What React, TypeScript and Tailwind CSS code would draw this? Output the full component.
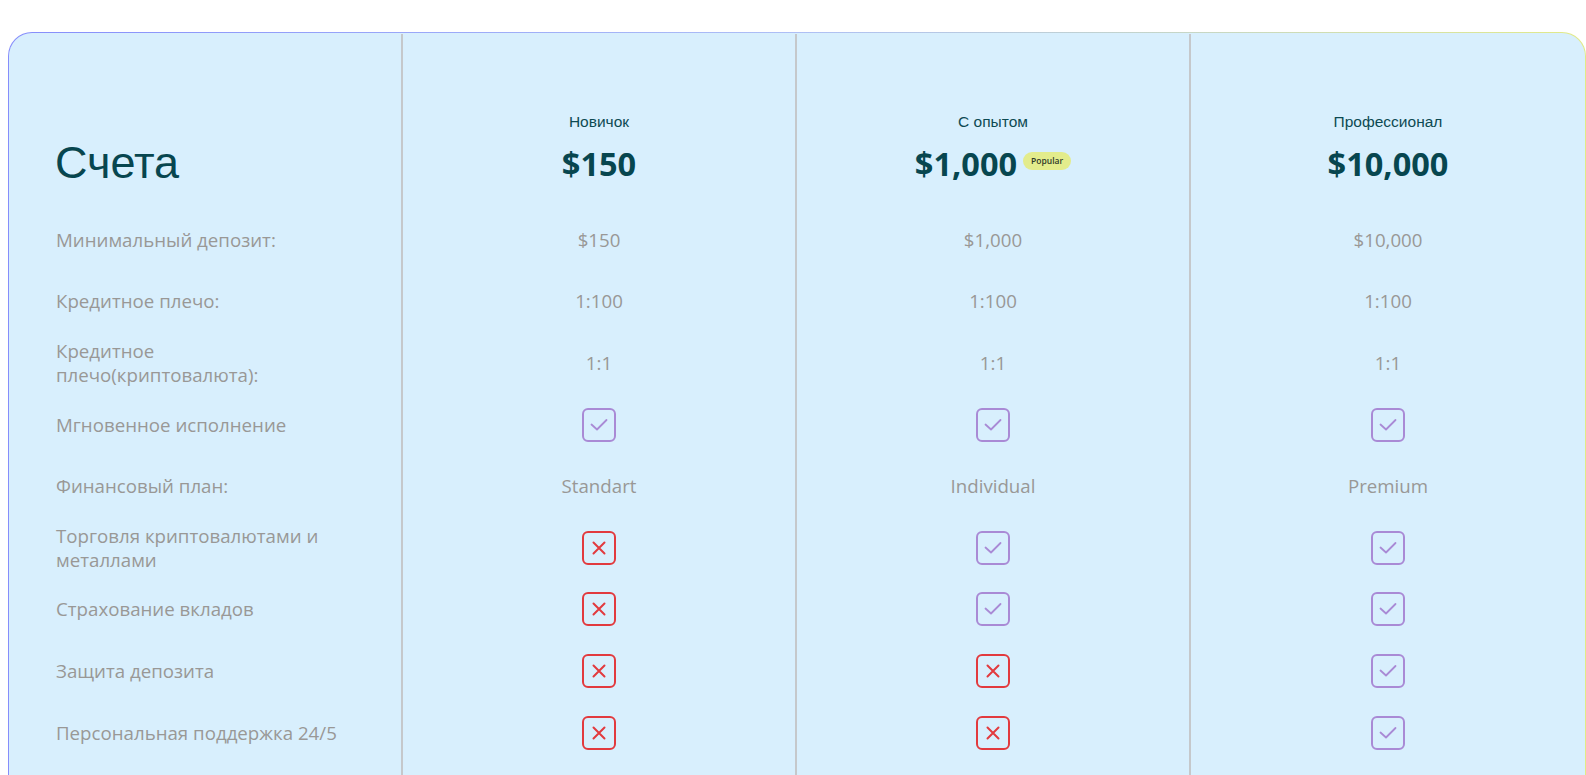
import React from "react";

type Cell = string | boolean;

const rows: { label: string; values: Cell[] }[] = [
  { label: "Минимальный депозит:", values: ["$150", "$1,000", "$10,000"] },
  { label: "Кредитное плечо:", values: ["1:100", "1:100", "1:100"] },
  { label: "Кредитное плечо(криптовалюта):", values: ["1:1", "1:1", "1:1"] },
  { label: "Мгновенное исполнение", values: [true, true, true] },
  { label: "Финансовый план:", values: ["Standart", "Individual", "Premium"] },
  { label: "Торговля криптовалютами и металлами", values: [false, true, true] },
  { label: "Страхование вкладов", values: [false, true, true] },
  { label: "Защита депозита", values: [false, false, true] },
  { label: "Персональная поддержка 24/5", values: [false, false, true] },
];

const tiers = [
  { name: "Новичок", price: "$150", popular: false },
  { name: "С опытом", price: "$1,000", popular: true },
  { name: "Профессионал", price: "$10,000", popular: false },
];

const openSans = { fontFamily: '"Open Sans", "Noto Sans", sans-serif' };
const arial = { fontFamily: '"Liberation Sans", Arial, sans-serif' };

function CheckBox() {
  return (
    <svg width="34" height="34" viewBox="0 0 34 34" fill="none">
      <rect x="1" y="1" width="32" height="32" rx="5" stroke="#a98ad5" strokeWidth="2" />
      <path d="M9.5 16.5 L15 21.5 L24.5 12" stroke="#a98ad5" strokeWidth="1.8" strokeLinecap="round" strokeLinejoin="round" />
    </svg>
  );
}

function CrossBox() {
  return (
    <svg width="34" height="34" viewBox="0 0 34 34" fill="none">
      <rect x="1" y="1" width="32" height="32" rx="5" stroke="#e23a3e" strokeWidth="2" />
      <path d="M11.5 11.5 L22.5 22.5 M22.5 11.5 L11.5 22.5" stroke="#e23a3e" strokeWidth="2" strokeLinecap="round" />
    </svg>
  );
}

export default function App() {
  return (
    <div className="h-[775px] overflow-hidden bg-white pt-[32px] pl-[8px]">
      <div className="w-[1578px] rounded-[24px] bg-linear-to-r from-[#868dfb] via-[#aebff5] to-[#e2ea86] p-px">
        <div className="grid grid-cols-4 rounded-[23px] bg-[#d8effd]">
          {/* Label column */}
          <div className="mt-px flex flex-col border-r-2 border-[#c5c8cb]">
            <div className="h-[175px] pt-[104px]">
              <div className="pl-[46px] text-[45px] leading-[50px] text-[#07464f]" style={arial}>
                Счета
              </div>
            </div>
            {rows.map((r) => (
              <div key={r.label} className="flex h-[61.6px] items-center pl-[47px]">
                <div className="w-[290px] text-[18.7px] leading-[24px] text-[#999896]" style={openSans}>
                  {r.label}
                </div>
              </div>
            ))}
            <div className="h-[80px]" />
          </div>
          {tiers.map((t, ti) => (
            <div
              key={t.name}
              className={
                ti < 2
                  ? "mt-px flex flex-col border-r-2 border-[#c5c8cb]"
                  : "mt-px flex flex-col"
              }
            >
              <div className="flex h-[175px] flex-col items-center pt-[78px]">
                <div className="h-[20px] text-[15.5px] leading-[20px] text-[#0d4a52]" style={arial}>
                  {t.name}
                </div>
                <div className="mt-[12px] flex h-[40px] items-center gap-[6px]">
                  <span className="text-[32.5px] font-bold leading-[40px] text-[#07464f]" style={openSans}>
                    {t.price}
                  </span>
                  {t.popular && (
                    <span
                      className="mb-[6px] flex h-[18px] items-center rounded-full bg-[#e3ec8c] px-[8px] text-[8.5px] font-semibold text-[#2f3a2a]"
                      style={openSans}
                    >
                      Popular
                    </span>
                  )}
                </div>
              </div>
              {rows.map((r) => {
                const v = r.values[ti];
                return (
                  <div key={r.label} className="flex h-[61.6px] items-center justify-center">
                    {typeof v === "string" ? (
                      <span className="text-[18.7px] leading-[24px] text-[#999896]" style={openSans}>
                        {v}
                      </span>
                    ) : v ? (
                      <CheckBox />
                    ) : (
                      <CrossBox />
                    )}
                  </div>
                );
              })}
              <div className="h-[80px]" />
            </div>
          ))}
        </div>
      </div>
    </div>
  );
}
